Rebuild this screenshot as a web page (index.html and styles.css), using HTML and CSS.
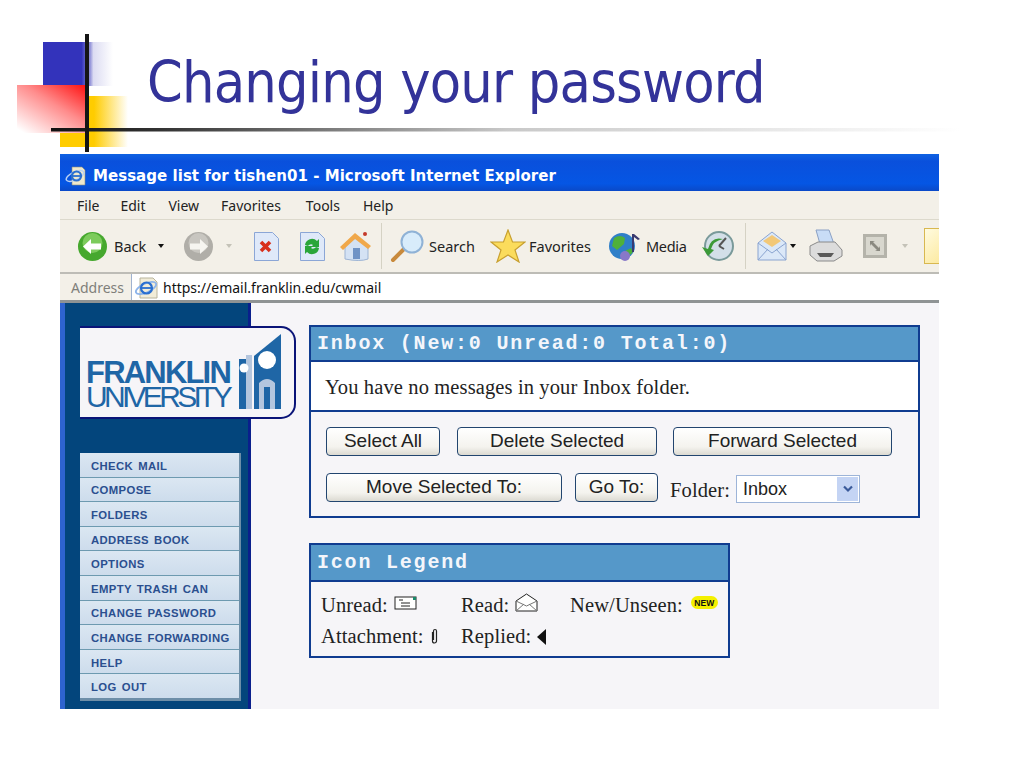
FILE: index.html
```html
<!DOCTYPE html>
<html lang="en">
<head>
    <meta charset="UTF-8">
    <title>Changing your password</title>
    <link rel="stylesheet" href="styles.css">
</head>
<body>
    <div class="slide">
        <!-- slide template decoration -->
        <svg class="decor" width="1024" height="160" viewBox="0 0 1024 160">
            <defs>
                <linearGradient id="fadeBlue" x1="0" x2="1" y1="0" y2="0">
                    <stop offset="0" stop-color="#3333bb"/>
                    <stop offset="0.55" stop-color="#3333bb"/>
                    <stop offset="0.68" stop-color="#9c9cdc"/>
                    <stop offset="0.72" stop-color="#dcdcf2"/>
                    <stop offset="1" stop-color="#ffffff"/>
                </linearGradient>
                <linearGradient id="fadeRed" x1="1" x2="0.1" y1="0" y2="1">
                    <stop offset="0" stop-color="#ff0f0f"/>
                    <stop offset="0.45" stop-color="#ff8c8c"/>
                    <stop offset="1" stop-color="#ffffff"/>
                </linearGradient>
                <linearGradient id="fadeYellow" x1="0" x2="1" y1="0" y2="0">
                    <stop offset="0" stop-color="#ffcc00"/>
                    <stop offset="0.5" stop-color="#ffcc00"/>
                    <stop offset="1" stop-color="#ffffff"/>
                </linearGradient>
                <linearGradient id="fadeRule" x1="0" x2="1" y1="0" y2="0">
                    <stop offset="0" stop-color="#111111"/>
                    <stop offset="0.12" stop-color="#333333"/>
                    <stop offset="0.5" stop-color="#c8c8c8"/>
                    <stop offset="1" stop-color="#ffffff"/>
                </linearGradient>
            </defs>
            <rect x="43" y="42" width="70" height="44" fill="url(#fadeBlue)"/>
            <rect x="60" y="96" width="68" height="51" fill="url(#fadeYellow)"/>
            <rect x="17" y="85" width="70" height="48" fill="url(#fadeRed)"/>
            <rect x="51" y="128" width="910" height="3.5" fill="url(#fadeRule)"/>
            <rect x="85" y="34" width="4" height="118" fill="#151515"/>
        </svg>

        <h1 class="slide-title">Changing your password</h1>

        <div class="window">
            <div class="titlebar">
                <svg class="ie-icon" width="21" height="20" viewBox="0 0 21 20">
                    <path d="M7 1h10l3 3v15H7z" fill="#efe8cc" stroke="#8a8a78" stroke-width="0.600"/>
                    <ellipse cx="10" cy="10" rx="9.500" ry="4" fill="none" stroke="#b8d0f4" stroke-width="1.500" transform="rotate(-25 10 10)"/>
                    <circle cx="11.500" cy="10" r="4.500" fill="none" stroke="#2a6fd0" stroke-width="2.200"/>
                    <path d="M7 10h9" stroke="#2a6fd0" stroke-width="1.800"/>
                </svg>
                <span>Message list for tishen01 - Microsoft Internet Explorer</span>
            </div>

            <div class="menubar">
                <span class="menu-file">File</span>
                <span class="menu-edit">Edit</span>
                <span class="menu-view">View</span>
                <span class="menu-fav">Favorites</span>
                <span class="menu-tools">Tools</span>
                <span>Help</span>
            </div>

            <div class="toolbar">
                <svg class="tool t-back" width="31" height="31" viewBox="0 0 31 31">
                    <circle cx="15.500" cy="15.500" r="14.500" fill="#46a82e"/>
                    <circle cx="15.500" cy="12" r="10" fill="#7ccb5c"/>
                    <path d="M6 15.500l8-7.500v4.500h10v6H14V23z" fill="#fff"/>
                </svg>
                <span class="tool-label t-back-label">Back</span>
                <span class="caret c-back"></span>
                <svg class="tool t-forward" width="31" height="31" viewBox="0 0 31 31">
                    <circle cx="15.500" cy="15.500" r="14.500" fill="#b0aea8"/>
                    <circle cx="15.500" cy="12" r="10" fill="#c8c6c0"/>
                    <path d="M25 15.500l-8-7.500v4.500H7v6h10V23z" fill="#f6f5f0"/>
                </svg>
                <span class="caret caret-off c-forward"></span>
                <svg class="tool t-stop" width="27" height="31" viewBox="0 0 27 31">
                    <path d="M1.500 1.500h18l6 6v22h-24z" fill="#dfe9f9" stroke="#8ba6d6"/>
                    <path d="M8 11l9 9m0-9l-9 9" stroke="#d8301c" stroke-width="3.600"/>
                </svg>
                <svg class="tool t-refresh" width="27" height="31" viewBox="0 0 27 31">
                    <path d="M1.500 1.500h18l6 6v22h-24z" fill="#dfe9f9" stroke="#8ba6d6"/>
                    <path d="M6 14a7 7 0 0 1 12-4l2-2v8h-8l2-2a3.500 3.500 0 0 0-5 1zM20 17a7 7 0 0 1-12 4l-2 2v-8h8l-2 2a3.500 3.500 0 0 0 5-1z" fill="#2aa63a"/>
                </svg>
                <svg class="tool t-home" width="34" height="32" viewBox="0 0 34 32">
                    <path d="M6 15l12-8 11 8v14q-8 3-23 0z" fill="#d4e2f4" stroke="#9db4d4"/>
                    <path d="M1 17L16 3l16 13-3 3-13-10L4 20z" fill="#f0a84a"/>
                    <rect x="14" y="18" width="7" height="11" fill="#6f93c6"/>
                    <circle cx="26" cy="4" r="2" fill="#c43a2a"/>
                </svg>
                <span class="tool-sep s-first"></span>
                <svg class="tool t-search" width="35" height="34" viewBox="0 0 35 34">
                    <path d="M3 31l11-11" stroke="#c88a3c" stroke-width="4" stroke-linecap="round"/>
                    <circle cx="22" cy="13" r="10.500" fill="#d8ecfb" stroke="#8fb2d6" stroke-width="2"/>
                </svg>
                <span class="tool-label t-search-label">Search</span>
                <svg class="tool t-star" width="36" height="34" viewBox="0 0 36 34">
                    <path d="M18 1l4.500 12H35l-10 8 4 12-11-7-11 7 4-12L1 13h12.500z" fill="#fbdc5c" stroke="#c8a030" stroke-width="1.200"/>
                </svg>
                <span class="tool-label t-fav-label">Favorites</span>
                <svg class="tool t-media" width="35" height="31" viewBox="0 0 35 31">
                    <circle cx="14" cy="15" r="13" fill="#2f7fc8"/>
                    <path d="M6 7q6-4 11 0l-1 6-7 6-5-4zM17 20l6-3 2 4-6 6z" fill="#4fb03a"/>
                    <circle cx="17" cy="25" r="5" fill="#8878c8"/>
                    <path d="M26 3l6 5-2 1-4-3v15h-2V3z" fill="#3a3a70"/>
                </svg>
                <span class="tool-label t-media-label">Media</span>
                <svg class="tool t-history" width="34" height="32" viewBox="0 0 34 32">
                    <circle cx="18" cy="16" r="14" fill="#d3dfe8" stroke="#7a9a9a" stroke-width="2"/>
                    <path d="M18 16l7-8M18 16l5 3" stroke="#555" stroke-width="2"/>
                    <path d="M1 17l6 9 6-6-3-1q2-8 12-10-12-3-15 10z" fill="#3c9a38"/>
                </svg>
                <span class="tool-sep s-second"></span>
                <svg class="tool t-mail" width="30" height="32" viewBox="0 0 30 32">
                    <path d="M1 13L15 2l14 11v17H1z" fill="#dbe8f8" stroke="#8aa4d0"/>
                    <path d="M6 11l9-6 9 6-9 6z" fill="#f2c878"/>
                    <path d="M1 13l14 10 14-10M1 30l10-11m18 11L19 19" fill="none" stroke="#8aa4d0"/>
                </svg>
                <span class="caret c-mail"></span>
                <svg class="tool t-print" width="35" height="34" viewBox="0 0 35 34">
                    <path d="M8 1h13l5 14H12z" fill="#c8dcf6" stroke="#8aa0c4"/>
                    <path d="M2 17l8-4h17l7 8v6l-8 5H9l-7-6z" fill="#dcdcdc" stroke="#8a8a8a"/>
                    <path d="M9 24h17l-3 4H12z" fill="#5a5a5a"/>
                </svg>
                <svg class="tool t-edit" width="24" height="24" viewBox="0 0 24 24">
                    <rect width="24" height="24" fill="#b4b3aa"/>
                    <rect x="3" y="3" width="18" height="18" fill="#d8d7ce"/>
                    <path d="M7 7h5l-2 1 6 6 1-2v5h-5l2-1-6-6-1 2z" fill="#8a8980"/>
                </svg>
                <span class="caret caret-off c-edit"></span>
                <span class="t-folder"></span>
            </div>

            <div class="addressbar">
                <span class="address-label">Address</span>
                <div class="address-field">
                    <svg class="address-icon" width="24" height="22" viewBox="0 0 24 22">
                        <path d="M6 1h13l4 4v16H6z" fill="#f1ecd8" stroke="#b8b49c"/>
                        <ellipse cx="12" cy="11" rx="11" ry="4.500" fill="none" stroke="#8db4ea" stroke-width="1.800" transform="rotate(-25 12 11)"/>
                        <circle cx="12.500" cy="11" r="5.500" fill="none" stroke="#2a6fd0" stroke-width="2.200"/>
                        <path d="M7 11h11" stroke="#2a6fd0" stroke-width="1.800"/>
                    </svg>
                    <span>https://email.franklin.edu/cwmail</span>
                </div>
            </div>

            <div class="page">
                <aside class="sidebar">
                    <div class="logo">
                        <div class="logo-text">
                            <div class="logo-top">FRANKLIN</div>
                            <div class="logo-bottom">UNIVERSITY</div>
                        </div>
                        <svg class="logo-arch" width="46" height="78" viewBox="0 0 46 78">
                            <path d="M2 26h13v50H2z" fill="#1f66a6"/>
                            <path d="M9 22h6v54H9z" fill="#b4c6de"/>
                            <path d="M17 23L44 1v75H17z" fill="#1f66a6"/>
                            <circle cx="30" cy="27" r="9" fill="#fff"/>
                            <path d="M22 50q8-8 16 0v26h-5V54h-6v22h-5z" fill="#b4c6de"/>
                            <circle cx="7" cy="35" r="4.500" fill="#fff"/>
                        </svg>
                    </div>
                    <nav class="nav">
                        <a>CHECK MAIL</a>
                        <a>COMPOSE</a>
                        <a>FOLDERS</a>
                        <a>ADDRESS BOOK</a>
                        <a>OPTIONS</a>
                        <a>EMPTY TRASH CAN</a>
                        <a>CHANGE PASSWORD</a>
                        <a>CHANGE FORWARDING</a>
                        <a>HELP</a>
                        <a>LOG OUT</a>
                    </nav>
                </aside>

                <main class="main">
                    <section class="panel panel-inbox">
                        <div class="panel-head">Inbox (New:0 Unread:0 Total:0)</div>
                        <div class="panel-msg">You have no messages in your Inbox folder.</div>
                        <div class="panel-actions">
                            <div class="button-row">
                                <button class="btn btn-select">Select All</button>
                                <button class="btn btn-delete">Delete Selected</button>
                                <button class="btn btn-forward">Forward Selected</button>
                            </div>
                            <div class="button-row">
                                <button class="btn btn-move">Move Selected To:</button>
                                <button class="btn btn-go">Go To:</button>
                                <span class="folder-label">Folder:</span>
                                <div class="select">
                                    <span>Inbox</span>
                                    <span class="select-arrow">
                                        <svg width="10" height="8" viewBox="0 0 10 8"><path d="M1 1.500l4 4 4-4" fill="none" stroke="#3a5a9a" stroke-width="2.200"/></svg>
                                    </span>
                                </div>
                            </div>
                        </div>
                    </section>

                    <section class="panel panel-legend">
                        <div class="panel-head">Icon Legend</div>
                        <div class="legend-grid">
                            <div class="legend-item">Unread:
                                <svg class="icon-up" width="23" height="14" viewBox="0 0 23 14">
                                    <rect x="1" y="1" width="21" height="12" fill="#fff" stroke="#222"/>
                                    <path d="M5 4h4M7 7h9M7 10h9" stroke="#222"/>
                                    <rect x="19" y="1" width="3" height="3" fill="#1a8a6a"/>
                                </svg>
                            </div>
                            <div class="legend-item">Read:
                                <svg class="icon-up" width="23" height="19" viewBox="0 0 23 19">
                                    <path d="M1 8l10.500-7L22 8v10H1z" fill="#fff" stroke="#222"/>
                                    <path d="M1 8l10.500 5L22 8M1 18l8-7m13 7l-8-7" fill="none" stroke="#777"/>
                                </svg>
                            </div>
                            <div class="legend-item">New/Unseen:
                                <span class="new-badge icon-up">NEW</span>
                            </div>
                            <div class="legend-item">Attachment:
                                <svg width="9" height="17" viewBox="0 0 9 17">
                                    <path d="M2.500 4v9a2 2 0 0 0 4 0V3a1.500 1.500 0 0 0-3 0v9" fill="none" stroke="#222" stroke-width="1.200"/>
                                </svg>
                            </div>
                            <div class="legend-item">Replied:
                                <svg width="10" height="16" viewBox="0 0 10 16"><path d="M9 0v16L0 8z" fill="#111"/></svg>
                            </div>
                        </div>
                    </section>
                </main>
            </div>
        </div>
    </div>
</body>
</html>
```

FILE: styles.css
```css
body {
    margin: 0;
    background-color: #fff;
    font-family: "Liberation Sans", Arial, sans-serif;
}
.slide {
    position: relative;
    width: 1024px;
    height: 768px;
    overflow: hidden;
}
.decor {
    position: absolute;
    top: 0;
    left: 0;
}
.slide-title {
    position: relative;
    margin: 0;
    height: 154px;
    padding-left: 147px;
    box-sizing: border-box;
    padding-top: 45px;
    font-family: "DejaVu Sans", sans-serif;
    font-stretch: condensed;
    font-weight: 400;
    font-size: 57px;
    line-height: 74px;
    letter-spacing: -0.800px;
    color: #333399;
    white-space: nowrap;
}

/* browser window */
.window {
    margin-left: 60px;
    width: 879px;
    height: 555px;
    display: flex;
    flex-direction: column;
    overflow: hidden;
    background-color: #f6f5f8;
    position: relative;
}
.titlebar {
    height: 37px;
    flex: none;
    display: flex;
    align-items: center;
    box-sizing: border-box;
    padding: 6px 0 0 5px;
    gap: 7px;
    background: linear-gradient(#0f62e2, #0a50dc 20%, #0556e4 80%, #0a49c8);
    color: #fff;
    font-family: "DejaVu Sans", sans-serif;
    font-weight: 700;
    font-size: 15px;
    letter-spacing: 0.040px;
}
.menubar {
    height: 29px;
    flex: none;
    display: flex;
    align-items: center;
    padding-left: 17px;
    background-color: #f3f0e8;
    border-bottom: 1px solid #dcd9cc;
    box-sizing: border-box;
    font-family: "Noto Sans", sans-serif;
    font-size: 14px;
    color: #222;
}
.menu-file { margin-right: 21px; }
.menu-edit { margin-right: 23px; }
.menu-view { margin-right: 22px; }
.menu-fav { margin-right: 25px; }
.menu-tools { margin-right: 23px; }

.toolbar {
    height: 54px;
    flex: none;
    display: flex;
    align-items: center;
    padding-left: 17px;
    box-sizing: border-box;
    background-color: #f3f0e8;
    border-bottom: 2px solid #bdbcb6;
    font-family: "Noto Sans", sans-serif;
    font-size: 14.500px;
    color: #222;
}
.tool { flex: none; }
.tool-label { flex: none; }
.tool-sep {
    width: 1px;
    height: 46px;
    flex: none;
    background-color: #d5d2c4;
}
.caret {
    width: 0;
    height: 0;
    flex: none;
    border-left: 3.500px solid transparent;
    border-right: 3.500px solid transparent;
    border-top: 4px solid #111;
}
.caret-off { border-top-color: #c4c2b8; }
.t-back-label { margin-left: 6px; width: 32px; }
.c-back { margin-left: 12px; }
.t-forward { margin-left: 19px; }
.c-forward { margin-left: 12px; }
.t-stop { margin-left: 21px; }
.t-refresh { margin-left: 19px; }
.t-home { margin-left: 13px; }
.s-first { margin-left: 8px; }
.t-search { margin-left: 8px; }
.t-search-label { margin-left: 4px; width: 47px; }
.t-star { margin-left: 14px; }
.t-fav-label { margin-left: 3px; width: 64px; }
.t-media { margin-left: 15px; }
.t-media-label { margin-left: 3px; width: 41px; letter-spacing: -0.300px; }
.t-history { margin-left: 14px; }
.s-second { margin-left: 10px; }
.t-mail { margin-left: 11px; }
.c-mail { margin-left: 3px; }
.t-print { margin-left: 12px; }
.t-edit { margin-left: 20px; }
.c-edit { margin-left: 15px; }
.t-folder {
    margin-left: 16px;
    width: 30px;
    height: 34px;
    flex: none;
    background: linear-gradient(135deg, #fffbe0, #fbe48c);
    border: 1px solid #d8b850;
}

.addressbar {
    height: 29px;
    flex: none;
    display: flex;
    align-items: center;
    padding-left: 11px;
    box-sizing: border-box;
    background-color: #f3f0e8;
    border-bottom: 3px solid #8f9394;
    font-family: "Noto Sans", sans-serif;
    font-size: 14px;
}
.address-label {
    color: #7f7f7a;
    width: 60px;
}
.address-field {
    flex: 1;
    height: 26px;
    display: flex;
    align-items: center;
    gap: 5px;
    background-color: #fff;
    color: #111;
    font-size: 14px;
    border-left: 1px solid #9fb2d0;
    padding: 1px 0 0 2px;
    box-sizing: border-box;
}

/* webmail page */
.page {
    flex: 1;
    display: flex;
    min-height: 0;
    border-left: 5px solid #2e63cf;
}
.sidebar {
    width: 186px;
    flex: none;
    box-sizing: border-box;
    background-color: #03457c;
    border-right: 3px solid #0a1f8c;
    padding-top: 23px;
}
.logo {
    position: relative;
    z-index: 1;
    margin-left: 15px;
    width: 216px;
    height: 93px;
    box-sizing: border-box;
    display: flex;
    justify-content: space-between;
    padding: 5px 11px 0 6px;
    background-color: #f6f5f8;
    border: 2px solid #0a1478;
    border-left: 0;
    border-radius: 0 15px 15px 0;
}
.logo-text {
    padding-top: 27px;
    color: #1f66a6;
    white-space: nowrap;
}
.logo-top {
    font-size: 31px;
    line-height: 25px;
    font-weight: 700;
    letter-spacing: -1.800px;
}
.logo-bottom {
    font-size: 30px;
    line-height: 24px;
    letter-spacing: -3.700px;
}
.logo-arch { flex: none; }
.nav {
    margin: 34px 0 0 15px;
    width: 161px;
    height: 248px;
    display: flex;
    flex-direction: column;
    box-sizing: border-box;
    background-color: #d2e0ee;
    border-style: solid;
    border-width: 0 2px 3px 0;
    border-color: #6d8ea8;
}
.nav a {
    flex: 1;
    display: flex;
    align-items: center;
    box-sizing: border-box;
    padding: 2px 0 0 11px;
    background: linear-gradient(#dbe7f2, #cddcec);
    color: #2b4f8f;
    font-size: 11.300px;
    font-weight: 700;
    letter-spacing: 0.400px;
    word-spacing: 1.500px;
    white-space: pre;
    border-bottom: 1px solid #6d9ab0;
}
.nav a:last-child { border-bottom: 0; }

.main {
    flex: 1;
    padding: 22px 0 0 58px;
    font-family: "Liberation Serif", serif;
    font-size: 20.500px;
    letter-spacing: 0.120px;
    color: #222;
}
.panel {
    box-sizing: border-box;
    border: 2px solid #103c90;
}
.panel-head {
    height: 35px;
    display: flex;
    align-items: center;
    padding-left: 6px;
    box-sizing: border-box;
    background-color: #5598c9;
    border-bottom: 2px solid #103c90;
    color: #f4f6fb;
    font-family: "Liberation Mono", monospace;
    font-weight: 700;
    font-size: 20px;
    letter-spacing: 1.800px;
    white-space: pre;
}
.panel-inbox {
    width: 611px;
    height: 193px;
}
.panel-msg {
    height: 50px;
    display: flex;
    align-items: center;
    padding: 3px 0 0 14px;
    box-sizing: border-box;
    background-color: #fff;
    border-bottom: 2px solid #103c90;
}
.panel-actions {
    padding: 15px 0 0 15px;
    display: flex;
    flex-direction: column;
    gap: 17px;
}
.button-row {
    display: flex;
    align-items: flex-start;
}
.btn {
    height: 29px;
    padding: 0 0 1px;
    box-sizing: border-box;
    background: linear-gradient(#ffffff, #f4f3ee 70%, #dcdad2);
    border: 1px solid #22456f;
    border-radius: 4px;
    color: #222;
    font-family: "Liberation Sans", sans-serif;
    font-size: 19px;
}
.btn-select { width: 114px; margin-right: 17px; }
.btn-delete { width: 200px; margin-right: 16px; }
.btn-forward { width: 219px; }
.btn-move { width: 236px; margin-right: 13px; }
.btn-go { width: 83px; margin-right: 12px; }
.folder-label { margin: 6px 6px 0 0; }
.select {
    width: 124px;
    height: 28px;
    margin-top: 2px;
    box-sizing: border-box;
    display: flex;
    align-items: center;
    justify-content: space-between;
    padding: 0 1px 0 6px;
    background-color: #fff;
    border: 1px solid #9db4d8;
    font-family: "Liberation Sans", sans-serif;
    font-size: 18px;
    letter-spacing: 0;
}
.select-arrow {
    width: 21px;
    height: 24px;
    display: flex;
    align-items: center;
    justify-content: center;
    background-color: #c4d4f4;
}
.panel-legend {
    width: 421px;
    height: 115px;
    margin-top: 25px;
}
.panel-legend .panel-head { height: 37px; }
.legend-grid {
    display: grid;
    grid-template-columns: 140px 109px auto;
    row-gap: 8px;
    padding: 11px 0 0 10px;
}
.legend-item {
    display: flex;
    align-items: center;
    gap: 6px;
    white-space: nowrap;
}
.icon-up { margin-bottom: 5px; }
.new-badge {
    width: 27px;
    height: 13px;
    margin-left: 2px;
    display: flex;
    align-items: center;
    justify-content: center;
    border-radius: 7px;
    background-color: #f4f000;
    color: #111;
    font-family: "Liberation Sans", sans-serif;
    font-size: 8.500px;
    font-weight: 700;
}
```
